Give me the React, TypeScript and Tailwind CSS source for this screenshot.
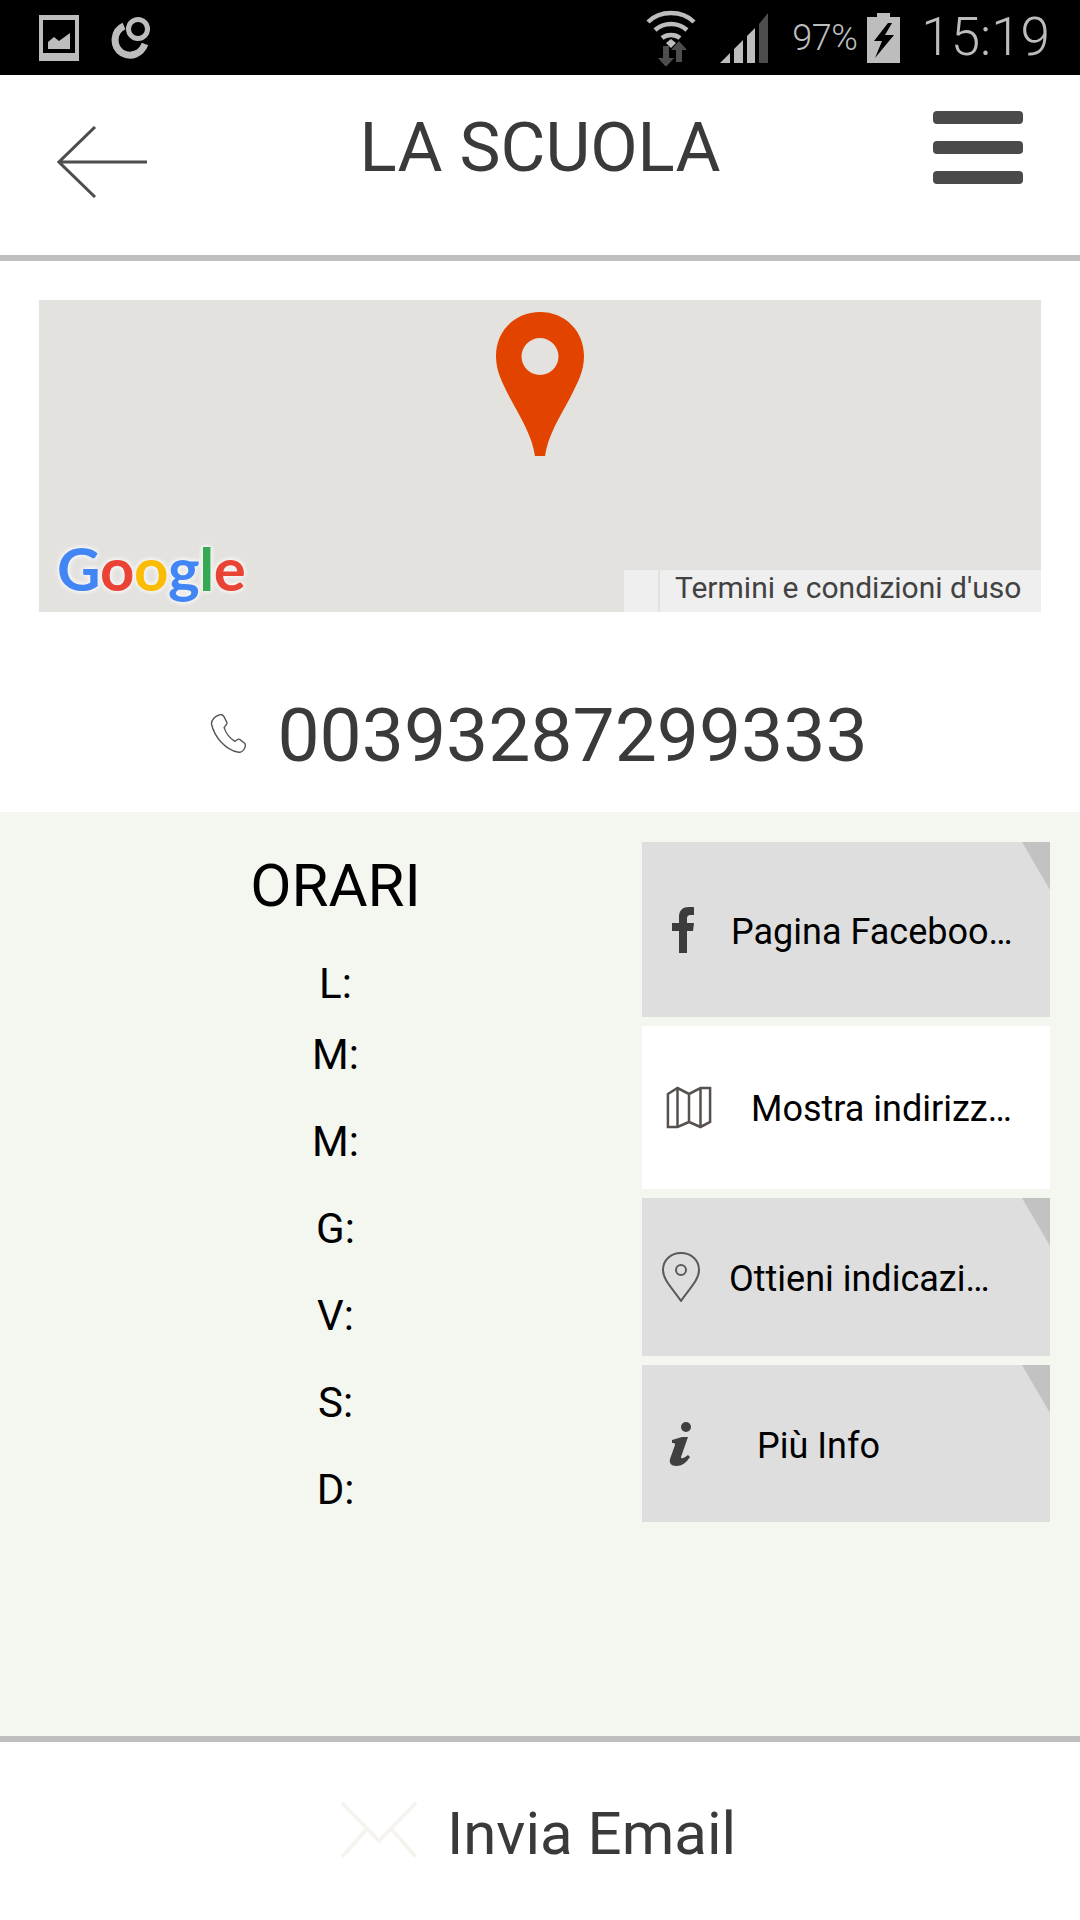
import { ReactNode } from "react";

function StatusBar() {
  return (
    <div className="flex h-[75px] items-center bg-black pl-[39px] pr-[30px] text-[#bdbdbd]">
      <svg width="40" height="46" viewBox="0 0 40 46">
        <path fill="#bdbdbd" fillRule="evenodd" d="M0 0h40v46H0z M4 5v33h32V5z" />
        <path fill="#bdbdbd" d="M9 34v-7l6-5 5 4 11-8v16z" />
      </svg>
      <svg className="ml-[31px]" width="42" height="44" viewBox="0 0 42 44">
        <path fill="none" stroke="#bdbdbd" strokeWidth="7" d="M14 10C3 15 2 30 12 37c9 5 19 1 23-9" />
        <circle cx="28" cy="13" r="9.5" fill="none" stroke="#bdbdbd" strokeWidth="5" />
      </svg>
      <svg className="ml-auto" width="50" height="56" viewBox="0 0 50 56">
        <path fill="none" stroke="#bdbdbd" strokeWidth="4.5" d="M2 12C14 0 36 0 48 12" />
        <path fill="none" stroke="#bdbdbd" strokeWidth="4.5" d="M9 20c9-8 23-8 32 0" />
        <path fill="none" stroke="#bdbdbd" strokeWidth="4.5" d="M16 28c5-4 13-4 18 0" />
        <path fill="#bdbdbd" d="M20 33l5-4 5 4-5 5z" />
        <path fill="#4d4d4d" d="M17 36h6v12h5l-8 9-8-9h5z" />
        <path fill="#4d4d4d" d="M30 52h6V40h5l-8-9-8 9h5z" />
      </svg>
      <svg className="ml-[24px]" width="48" height="50" viewBox="0 0 48 50">
        <path fill="#bdbdbd" d="M0 50L10 40v10zM14 36l9-9v23h-9zM27 23l8-8v35h-8z" />
        <path fill="#4d4d4d" d="M39 11l9-11v50h-9z" />
      </svg>
      <span className="ml-[24px] text-[36px] font-light leading-none tracking-[-0.5px]">97%</span>
      <svg className="ml-[10px]" width="33" height="50" viewBox="0 0 33 50">
        <path fill="#bdbdbd" d="M10 0h13v4h10v46H0V4h10z" />
        <path fill="#000" d="M21 10L7 28h8L8 45l19-23h-9l7-12z" />
      </svg>
      <span className="ml-[21px] text-[53px] font-light leading-none">15:19</span>
    </div>
  );
}

function Header() {
  return (
    <div className="flex h-[186px] items-center justify-between border-b-[6px] border-[#bfbfbf] bg-white px-[57px]">
      <svg className="mb-[7px]" width="90" height="72" viewBox="0 0 90 72">
        <path fill="none" stroke="#4d4d4d" strokeWidth="3" d="M90 36H3M38 1L2 36l36 35" />
      </svg>
      <span className="mb-[35px] text-[69px] leading-none text-[#3a3a3a]">LA SCUOLA</span>
      <div className="mb-[35px] flex w-[90px] flex-col gap-[17px]">
        <div className="h-[13px] rounded-[4px] bg-[#4a4a4a]" />
        <div className="h-[13px] rounded-[4px] bg-[#4a4a4a]" />
        <div className="h-[13px] rounded-[4px] bg-[#4a4a4a]" />
      </div>
    </div>
  );
}

function GoogleLogo() {
  return (
    <span className="absolute bottom-[14px] left-[18px] flex font-['Lato',sans-serif] text-[60px] font-bold leading-none tracking-[-0.5px] [text-shadow:0_0_5px_#f5f5f5,0_0_5px_#f5f5f5,0_0_5px_#f5f5f5]">
      <span className="text-[#4285f4]">G</span>
      <span className="text-[#ea4335]">o</span>
      <span className="text-[#fbbc05]">o</span>
      <span className="text-[#4285f4]">g</span>
      <span className="text-[#34a853]">l</span>
      <span className="text-[#ea4335]">e</span>
    </span>
  );
}

function MapBox() {
  return (
    <div className="relative mx-[39px] mt-[39px] h-[312px] bg-[#e3e2de]">
      <svg className="absolute left-[457px] top-[12px]" width="88" height="144" viewBox="0 0 88 144">
        <path
          fill="#e24400"
          fillRule="evenodd"
          d="M44 0C19 0 0 19 0 44c0 15 6 26 14 42 12 22 22 38 25 58h10c3-20 13-36 25-58 8-16 14-27 14-42C88 19 69 0 44 0zm0 26a18 18 0 110 37 18 18 0 010-37z"
        />
      </svg>
      <GoogleLogo />
      <div className="absolute bottom-0 right-0 flex h-[42px] w-[417px] items-center bg-[#efefef] text-[#424242]">
        <div className="h-full w-[36px] border-r-[2px] border-[#e3e2de]" />
        <span className="mb-[6px] ml-[15px] text-[30px] leading-none">Termini e condizioni d'uso</span>
      </div>
    </div>
  );
}

function HoursRow({ day, first }: { day: string; first?: boolean }) {
  return (
    <div className={`${first ? "h-[71px]" : "h-[87px]"} text-center text-[42px] leading-[71px]`}>{day}</div>
  );
}

function ActionButton({
  icon,
  label,
  height,
  active,
  textClass,
}: {
  icon: ReactNode;
  label: string;
  height: string;
  active?: boolean;
  textClass: string;
}) {
  return (
    <div className={`relative flex items-center ${height} ${active ? "bg-white" : "bg-[#dedede]"}`}>
      {icon}
      <span className={`text-[36px] leading-none text-black ${textClass}`}>{label}</span>
      {!active && (
        <div className="absolute right-0 top-0 h-[48px] w-[28px] bg-[#c2c2c2] [clip-path:polygon(0_0,100%_0,100%_100%)]" />
      )}
    </div>
  );
}

export default function App() {
  return (
    <div className="flex h-[1920px] w-[1080px] flex-col overflow-hidden bg-white font-['Roboto',sans-serif]">
      <StatusBar />
      <Header />
      <MapBox />

      <div className="flex h-[200px] items-center justify-center pr-[2px] pt-[47px]">
        <svg className="mb-[4px]" width="36" height="39" viewBox="0 0 36 40">
          <path
            fill="none"
            stroke="#555"
            strokeWidth="1.4"
            d="M9 1c2-1 4 0 5 2l3 6c0 2-2 3-3 5 2 6 6 11 11 14 2-1 3-3 5-2l5 4c1 1 1 3 0 5-1 3-4 5-7 4C16 37 4 24 1 10c0-4 4-8 8-9z"
          />
        </svg>
        <span className="ml-[31px] text-[75px] leading-none text-[#3a3a3a]">00393287299333</span>
      </div>

      <div className="flex h-[930px] items-start border-b-[6px] border-[#bfbfbf] bg-[#f4f6f0] pr-[30px] pt-[30px]">
        <div className="w-[642px]">
          <div className="w-[671px]">
            <div className="mb-[20px] mt-[2px] text-center text-[60px] leading-[84px] text-black">ORARI</div>
            <HoursRow day="L:" first />
            <HoursRow day="M:" />
            <HoursRow day="M:" />
            <HoursRow day="G:" />
            <HoursRow day="V:" />
            <HoursRow day="S:" />
            <HoursRow day="D:" />
          </div>
        </div>
        <div className="flex w-[408px] flex-col gap-[9px]">
          <ActionButton
            height="h-[175px]"
            textClass="ml-[37px] mt-[4px]"
            label="Pagina Faceboo…"
            icon={
              <svg className="ml-[30px]" width="22" height="46" viewBox="0 0 22 46">
                <path fill="#3c3c3c" d="M7 46V24H0v-8h7v-6C7 3 11 0 17 0h5v8h-3c-3 0-4 1-4 4v4h7l-1 8h-6v22z" />
              </svg>
            }
          />
          <ActionButton
            active
            height="h-[163px]"
            textClass="ml-[39px] mt-[2px]"
            label="Mostra indirizz…"
            icon={
              <svg className="ml-[24px]" width="46" height="43" viewBox="0 0 48 43" preserveAspectRatio="none">
                <path
                  fill="none"
                  stroke="#57504c"
                  strokeWidth="2.6"
                  d="M2 8l10-6 12 6 12-6 10 0v34l-10 5-12-5-12 5-10 0zM12 2v39M24 8v28M36 2v39"
                />
              </svg>
            }
          />
          <ActionButton
            height="h-[158px]"
            textClass="ml-[29px] mt-[4px]"
            label="Ottieni indicazi…"
            icon={
              <svg className="ml-[20px]" width="38" height="50" viewBox="0 0 38 50">
                <path
                  fill="none"
                  stroke="#5a5a5a"
                  strokeWidth="2"
                  d="M19 49C11 37 1 28 1 18 1 8 9 1 19 1s18 7 18 17c0 10-10 19-18 31z"
                />
                <circle cx="19" cy="18" r="5" fill="none" stroke="#5a5a5a" strokeWidth="2" />
              </svg>
            }
          />
          <ActionButton
            height="h-[157px]"
            textClass="ml-[64px] mt-[4px]"
            label="Più Info"
            icon={
              <svg className="ml-[27px]" width="24" height="44" viewBox="0 0 24 44">
                <circle cx="17" cy="5" r="5" fill="#404040" />
                <path
                  fill="#404040"
                  d="M3 18l10-3h6l-7 20c0 2 2 2 7-2l2 2c-4 6-8 9-14 9-5 0-7-3-6-7l5-14c0-2-1-2-3-2z"
                />
              </svg>
            }
          />
        </div>
      </div>

      <div className="flex flex-1 items-center justify-center pr-[4px] pt-[6px]">
        <svg className="mb-[8px]" width="78" height="58" viewBox="0 0 76 58" preserveAspectRatio="none">
          <path
            fill="none"
            stroke="#f6f3ef"
            strokeWidth="3.5"
            d="M2 2l36 38L74 2M2 56l24-28M74 56L50 28"
          />
        </svg>
        <span className="ml-[29px] text-[60px] leading-none text-[#3a3a3a]">Invia Email</span>
      </div>
    </div>
  );
}
